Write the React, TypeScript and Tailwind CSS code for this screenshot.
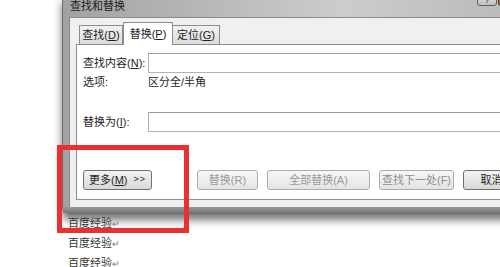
export default function App() {
  return (
    <div className="relative w-[500px] h-[267px] overflow-hidden bg-white font-['Liberation_Sans','Noto_Sans_CJK_SC',sans-serif] text-[11px] text-[#1e1e1e]">
      {/* dialog window */}
      <div className="ml-[62px] -mt-[3px] w-[560px] rounded-bl-[6px] border border-[#6c6c6c] bg-gradient-to-r from-[#a2a2a2] via-[#cdcdcd] to-[#adadad] shadow-[0_6px_9px_rgba(0,0,0,0.55)]">
        <div className="flex h-[19px] items-start">
          <span className="ml-[7px] w-[407px] pt-[2px] leading-[12px] text-[#202020]">查找和替换</span>
          <div className="-mt-[4px] flex h-[12px] w-[20px] items-end justify-center rounded-[3px] border border-[#5e5e5e] bg-gradient-to-b from-[#e8e8e8] to-[#bdbdbd] text-[9px] leading-[10px] text-[#333]">
            ?
          </div>
          <div className="-mt-[4px] ml-[1px] h-[12px] w-[40px] rounded-[3px] border border-[#5a2a20] bg-gradient-to-b from-[#d9a090] to-[#b4523c]" />
        </div>

        {/* client area */}
        <div className="ml-[6px] border-l border-t border-[#8a8a8a] bg-[#f0f0f0] pl-[6px] pt-[4px] pb-[7px]">
          <div className="flex h-[22px] items-end pl-[3px]">
            <div className="flex h-[19px] w-[44px] items-center justify-center border border-b-0 border-[#898c95] bg-gradient-to-b from-[#f2f2f2] to-[#dcdcdc]">
              查找(<u>D</u>)
            </div>
            <div className="relative z-10 -mb-px flex h-[23px] w-[50px] items-center justify-center border border-b-0 border-[#898c95] bg-white">
              替换(<u>P</u>)
            </div>
            <div className="flex h-[19px] w-[47px] items-center justify-center border border-b-0 border-l-0 border-[#898c95] bg-gradient-to-b from-[#f2f2f2] to-[#dcdcdc]">
              定位(<u>G</u>)
            </div>
          </div>

          {/* tab panel */}
          <div className="border border-[#898c95] bg-white pl-[6px] pt-[8px] pb-[9px]">
            <div className="flex h-[20px] items-center">
              <span className="w-[65px]">
                查找内容(<u>N</u>):
              </span>
              <div className="h-[20px] flex-1 border border-[#b3b3b3] border-t-[#9a9a9a] bg-white" />
            </div>
            <div className="mt-[2px] flex h-[14px] items-center leading-[14px]">
              <span className="w-[65px]">选项:</span>
              <span>区分全/半角</span>
            </div>
            <div className="mt-[23px] flex h-[20px] items-center">
              <span className="w-[65px]">
                替换为(<u>I</u>):
              </span>
              <div className="h-[20px] flex-1 border border-[#b3b3b3] border-t-[#9a9a9a] bg-white" />
            </div>
            <div className="mt-[38px] flex h-[20px] items-center">
              <button className="flex h-[20px] w-[69px] items-center justify-center rounded-[3px] border border-[#707070] bg-gradient-to-b from-[#f4f4f4] to-[#d8d8d8] text-[#1e1e1e]">
                更多(<u>M</u>)<span className="ml-[6px] tracking-[1px] text-[9px]">&gt;&gt;</span>
              </button>
              <button className="ml-[45px] flex h-[20px] w-[61px] items-center justify-center rounded-[3px] border border-[#a9adb0] bg-gradient-to-b from-[#f7f7f7] to-[#e4e4e4] text-[#9a9a9a]">
                替换(R)
              </button>
              <button className="ml-[9px] flex h-[20px] w-[103px] items-center justify-center rounded-[3px] border border-[#a9adb0] bg-gradient-to-b from-[#f7f7f7] to-[#e4e4e4] text-[#9a9a9a]">
                全部替换(A)
              </button>
              <button className="ml-[9px] flex h-[20px] w-[75px] items-center justify-center rounded-[3px] border border-[#a9adb0] bg-gradient-to-b from-[#f7f7f7] to-[#e4e4e4] text-[#8e8e8e]">
                查找下一处(F)
              </button>
              <button className="ml-[9px] flex h-[20px] w-[57px] items-center justify-center rounded-[3px] border border-[#707070] bg-gradient-to-b from-[#f4f4f4] to-[#d8d8d8] text-[#1e1e1e]">
                取消
              </button>
            </div>
          </div>
        </div>
        <div className="h-[6px] bg-gradient-to-b from-[#9a9a9a] to-[#767676]" />
      </div>

      {/* document text behind */}
      <div className="ml-[68px] leading-[19px] text-[#333]">
        {[0, 1, 2].map((i) => (
          <div key={i}>
            百度经验<span className="text-[9px] text-[#6f7a8a]">↵</span>
          </div>
        ))}
      </div>

      {/* red highlight annotation */}
      <div className="absolute left-[57px] top-[145px] h-[88px] w-[132px] border-[5px] border-[#ef2f2f]" />
    </div>
  );
}
